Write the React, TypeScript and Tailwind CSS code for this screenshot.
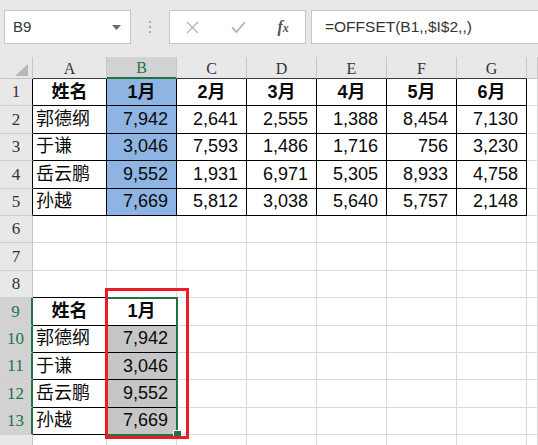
import React from "react";

const names = ["郭德纲", "于谦", "岳云鹏", "孙越"];
const data = [
  ["7,942", "2,641", "2,555", "1,388", "8,454", "7,130"],
  ["3,046", "7,593", "1,486", "1,716", "756", "3,230"],
  ["9,552", "1,931", "6,971", "5,305", "8,933", "4,758"],
  ["7,669", "5,812", "3,038", "5,640", "5,757", "2,148"],
];
const months = ["1月", "2月", "3月", "4月", "5月", "6月"];
const letters = ["A", "B", "C", "D", "E", "F", "G", ""];
const colW = [
  "w-[74px] shrink-0",
  "w-[70px] shrink-0",
  "w-[70px] shrink-0",
  "w-[70px] shrink-0",
  "w-[70px] shrink-0",
  "w-[70px] shrink-0",
  "w-[70px] shrink-0",
  "flex-1",
];

function cellContent(r: number, c: number): { text: string; bold: boolean; align: "l" | "r" | "c" } | null {
  if (r === 1 && c === 0) return { text: "姓名", bold: true, align: "c" };
  if (r === 1 && c >= 1 && c <= 6) return { text: months[c - 1], bold: true, align: "c" };
  if (r >= 2 && r <= 5 && c === 0) return { text: names[r - 2], bold: false, align: "l" };
  if (r >= 2 && r <= 5 && c >= 1 && c <= 6) return { text: data[r - 2][c - 1], bold: false, align: "r" };
  if (r === 9 && c === 0) return { text: "姓名", bold: true, align: "c" };
  if (r === 9 && c === 1) return { text: "1月", bold: true, align: "c" };
  if (r >= 10 && r <= 13 && c === 0) return { text: names[r - 10], bold: false, align: "l" };
  if (r >= 10 && r <= 13 && c === 1) return { text: data[r - 10][0], bold: false, align: "r" };
  return null;
}

function Cell({ r, c }: { r: number; c: number }) {
  const inT1 = r >= 1 && r <= 5 && c <= 6;
  const inT2 = r >= 9 && r <= 13 && c <= 1;
  const rightBlack = inT1 || inT2;
  const bottomBlack = inT1 || inT2 || (r === 8 && c <= 1);
  const rightCls = rightBlack ? "border-r border-r-black" : "border-r border-r-[#dadada]";
  const bottomCls = bottomBlack ? "border-b border-b-black" : "border-b border-b-[#dadada]";
  let bg = "bg-white";
  if (c === 1 && r >= 1 && r <= 5) bg = "bg-[#8db4e2]";
  if (c === 1 && r >= 10 && r <= 13) bg = "bg-[#c6c6c6]";
  const content = cellContent(r, c);
  const alignCls =
    content?.align === "l" ? "justify-start pl-[3px]" : content?.align === "r" ? "justify-end pr-[8px]" : "justify-center";
  return (
    <div className={`${colW[c]} h-full flex items-center ${rightCls} ${bottomCls} ${bg} ${alignCls} overflow-hidden whitespace-nowrap`}>
      {content && (
        <span className={content.bold ? "font-bold text-[#0a0a0a]" : "text-[#0a0a0a]"}>{content.text}</span>
      )}
    </div>
  );
}

function RowHeader({ r }: { r: number }) {
  const hi = r >= 9 && r <= 13;
  const black = r >= 1 && r <= 5;
  const cls = hi
    ? "bg-[#d2d2d2] text-[#217346] border-r-2 border-r-[#217346]"
    : black
    ? "bg-[#e8e8e8] text-[#333] border-r border-r-black"
    : "bg-[#e8e8e8] text-[#333] border-r border-r-[#c6c6c6]";
  return (
    <div
      className={`w-[33px] shrink-0 h-full flex items-center justify-center border-b border-b-[#cfcfcf] ${cls} font-['Liberation_Serif',serif] text-[17px]`}
    >
      {r <= 13 ? r : ""}
    </div>
  );
}

export default function App() {
  const rows = Array.from({ length: 14 }, (_, i) => i + 1);
  return (
    <div className="relative w-[538px] h-[445px] overflow-hidden bg-[#e8e8e8] font-['Liberation_Sans','Noto_Sans_CJK_SC',sans-serif]">
      {/* Formula bar */}
      <div className="h-[57px] flex items-start pt-[10px]">
        <div className="ml-[4px] w-[127px] h-[34px] shrink-0 bg-white border border-[#c6c6c6] flex items-center justify-between pl-[8px] pr-[9px]">
          <span className="text-[15px] text-[#333]">B9</span>
          <svg width="9" height="5" viewBox="0 0 9 5">
            <polygon points="0,0 9,0 4.5,5" fill="#6b6b6b" />
          </svg>
        </div>
        <div className="w-[38px] shrink-0 h-[34px] flex flex-col items-center justify-center gap-[3px]">
          <div className="w-[2px] h-[2px] bg-[#a8a8a8]" />
          <div className="w-[2px] h-[2px] bg-[#a8a8a8]" />
          <div className="w-[2px] h-[2px] bg-[#a8a8a8]" />
        </div>
        <div className="w-[137px] h-[34px] shrink-0 bg-white border border-[#c6c6c6] flex items-center">
          <div className="w-[46px] flex justify-center">
            <svg width="13" height="13" viewBox="0 0 13 13">
              <path d="M1 1 L12 12 M12 1 L1 12" stroke="#b4b4b4" strokeWidth="1.4" />
            </svg>
          </div>
          <div className="w-[46px] flex justify-center">
            <svg width="15" height="12" viewBox="0 0 15 12">
              <path d="M1 6.5 L5.5 11 L14 1" stroke="#b4b4b4" strokeWidth="1.8" fill="none" />
            </svg>
          </div>
          <div className="w-[44px] flex justify-center">
            <span className="font-['Liberation_Serif',serif] italic text-[16px] text-[#555] font-bold">
              f<span className="text-[12px]">x</span>
            </span>
          </div>
        </div>
        <div className="ml-[5px] w-[240px] h-[34px] shrink-0 bg-white border border-[#c6c6c6] flex items-center pl-[13px]">
          <span className="text-[15.5px] text-[#333] whitespace-nowrap">=OFFSET(B1,,$I$2,,)</span>
        </div>
      </div>

      {/* Sheet */}
      <div className="flex flex-col bg-white text-[18px]">
        {/* Column header */}
        <div className="h-[22px] flex bg-[#e8e8e8]">
          <div className="w-[33px] shrink-0 h-full border-r border-r-[#c6c6c6] border-b border-b-[#c6c6c6] flex items-end justify-end pr-[4px] pb-[2px]">
            <svg width="13" height="12" viewBox="0 0 13 12">
              <polygon points="13,0 13,12 0,12" fill="#b8b8b8" />
            </svg>
          </div>
          {letters.map((l, i) => {
            const sel = i === 1;
            const cls = sel
              ? "bg-[#d2d2d2] text-[#217346] border-b-2 border-b-[#217346]"
              : i === 7
              ? "text-[#333] border-b border-b-[#c6c6c6]"
              : "text-[#333] border-b border-b-[#3a3a3a]";
            return (
              <div
                key={i}
                className={`${colW[i]} h-full flex items-center justify-center border-r border-r-[#c6c6c6] ${cls} font-['Liberation_Serif',serif] text-[16px] pt-[2px]`}
              >
                {l}
              </div>
            );
          })}
        </div>
        {rows.map((r) => (
          <div key={r} className="h-[27.4px] flex shrink-0">
            <RowHeader r={r} />
            {letters.map((_, c) => (
              <Cell key={c} r={r} c={c} />
            ))}
          </div>
        ))}
      </div>

      {/* Selection outline */}
      <div className="absolute left-[106px] top-[297px] w-[72px] h-[139px] border-2 border-[#217346] pointer-events-none" />
      <div className="absolute left-[173px] top-[430px] w-[8px] h-[8px] bg-[#217346] border-l border-t border-white" />
      {/* Red annotation rectangle */}
      <div className="absolute left-[105px] top-[288px] w-[84px] h-[151px] border-[3px] border-[#ec1c24] pointer-events-none" />
    </div>
  );
}
